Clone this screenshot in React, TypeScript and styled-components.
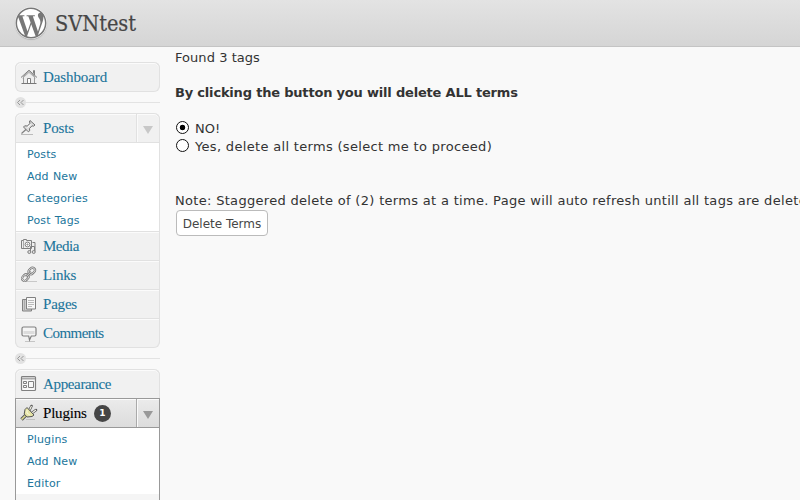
import React from 'react';
import styled, { createGlobalStyle, css } from 'styled-components';
import { FaWordpressSimple } from 'react-icons/fa';

const GlobalStyle = createGlobalStyle`
  * { box-sizing: border-box; }
  body { margin: 0; background: #f9f9f9; overflow: hidden; font-family: "DejaVu Sans", sans-serif; }
`;

const Page = styled.div`
  width: 800px;
  height: 500px;
  overflow: hidden;
  background: #f9f9f9;
`;

const Header = styled.header`
  height: 47px;
  display: flex;
  align-items: center;
  padding-left: 15px;
  gap: 8px;
  background: linear-gradient(#e3e3e3, #d5d5d5);
  border-bottom: 1px solid #c4c4c4;
`;

const Logo = styled.div`
  width: 32px;
  height: 32px;
  border-radius: 50%;
  background: #fff;
  color: #777;
  box-shadow: 0 1px 1px #b5b5b5;
  svg { display: block; }
`;

const SiteName = styled.h1`
  margin: 0;
  padding-top: 1px;
  font: 400 21.5px/46px "DejaVu Serif Condensed", "DejaVu Serif", serif;
  font-stretch: condensed;
  letter-spacing: 0;
  -webkit-text-stroke: 0.2px currentColor;
  color: #464646;
`;

const Body = styled.div`
  display: flex;
`;

const Sidebar = styled.nav`
  width: 145px;
  margin: 15px 0 0 15px;
  flex: none;
`;

const Group = styled.section`
  border: 1px solid #e1e1e1;
  border-top: 0;
  border-radius: 6px;
`;

const Row = styled.div<{ $first?: boolean; $last?: boolean; $active?: boolean }>`
  height: 29px;
  display: flex;
  align-items: center;
  margin: 0 -1px;
  border: 1px solid #e1e1e1;
  border-bottom: 0;
  background: #f1f1f1;
  box-shadow: inset 0 1px #fbfbfb;
  color: #21759b;
  ${p => p.$first && css`border-radius: 6px 6px 0 0;`}
  ${p => p.$last && css`border-radius: 0 0 6px 6px;`}
  ${p => p.$first && p.$last && css`border-radius: 6px;`}
  ${p => p.$active && css`
    border-color: #999;
    background: linear-gradient(#ebebeb, #dcdcdc);
    color: #000;
  `}
`;

const IconSlot = styled.span`
  width: 27px;
  padding-left: 3px;
  flex: none;
  svg { display: block; }
`;

const Label = styled.span<{ $width: number; $spacing: number }>`
  width: ${p => p.$width}px;
  padding-bottom: 1px;
  font: 400 15px/26px "Liberation Serif", serif;
  letter-spacing: ${p => p.$spacing}px;
  -webkit-text-stroke: 0.1px currentColor;
  white-space: nowrap;
`;

const Toggle = styled.span<{ $active?: boolean }>`
  width: 23px;
  height: 28px;
  margin-left: auto;
  padding-top: 4px;
  display: flex;
  align-items: center;
  justify-content: center;
  border-left: 1px solid ${p => (p.$active ? '#aaa' : '#e1e1e1')};
  box-shadow: inset 1px 0 #fafafa;
  &::after {
    content: "";
    margin-right: 1px;
    border: 5px solid transparent;
    border-top: 8px solid ${p => (p.$active ? '#999' : '#c8c8c8')};
    border-bottom: 0;
  }
`;

const Submenu = styled.div<{ $active?: boolean }>`
  background: #fff;
  border-top: 1px solid #e1e1e1;
  ${p => p.$active && css`
    margin: 0 -1px;
    border: 1px solid #999;
    border-bottom: 0;
  `}
`;

const SubItem = styled.a`
  display: block;
  height: 22px;
  padding-left: 11px;
  font-size: 11px;
  line-height: 24px;
  letter-spacing: 0.15px;
  word-spacing: 0.5px;
  color: #21759b;
`;

const MenuTail = styled.div`
  height: 8px;
  background: #f5f5f5;
`;

const Badge = styled.span`
  width: 17px;
  height: 17px;
  margin-top: 1px;
  border-radius: 50%;
  background: #464646;
  color: #fff;
  font: 700 9px/17px "DejaVu Sans", sans-serif;
  text-align: center;
`;

const Separator = styled.div`
  height: 21px;
  display: flex;
  align-items: center;
`;

const Collapse = styled.span`
  width: 11px;
  height: 11px;
  border-radius: 50%;
  background: #e2e2e2;
  svg { display: block; }
`;

const Rule = styled.span`
  flex: 1;
  height: 1px;
  background: #e3e3e3;
`;

const Content = styled.main`
  padding: 2px 0 0 15px;
  flex: none;
  font-size: 13px;
  line-height: 18px;
  white-space: nowrap;
  color: #333;
`;

const Line = styled.p<{ $gap?: number; $bold?: boolean; $spacing?: number }>`
  margin: 0 0 ${p => p.$gap || 0}px;
  height: 18px;
  font-weight: ${p => (p.$bold ? 700 : 400)};
  letter-spacing: ${p => p.$spacing || 0}px;
`;

const Choice = styled.label<{ $gap?: number; $spacing?: number }>`
  display: flex;
  align-items: center;
  height: 18px;
  gap: 6px;
  margin-bottom: ${p => p.$gap || 0}px;
  letter-spacing: ${p => p.$spacing || 0}px;
`;

const Radio = styled.span<{ $checked?: boolean }>`
  width: 13px;
  height: 13px;
  margin: -3px 0 0 1px;
  border: 1px solid #111;
  border-radius: 50%;
  background: ${p => (p.$checked ? 'radial-gradient(circle, #000 2.5px, #fff 3.1px)' : '#fff')};
`;

const Button = styled.button`
  display: block;
  width: 92px;
  height: 26px;
  margin: 0 0 0 1px;
  padding: 1px 0 0;
  font: 12px "DejaVu Sans", sans-serif;
  color: #464646;
  background: #fff;
  border: 1px solid #bbb;
  border-radius: 4px;
`;

const Icon = ({ children }: { children: React.ReactNode }) => (
  <svg width="20" height="20" viewBox="0 0 20 20" fill="none" stroke="#808080" strokeWidth="1">
    {children}
  </svg>
);

const icons = {
  home: (
    <Icon>
      <path d="M4.5 9.5v7h11v-7L10 4.5z" fill="#ededed" stroke="#999" />
      <path d="M2 10.5L10 3.2l8 7.300M14.5 6.5v-3h1V8" />
      <path d="M3.5 11.2L10 5.5l6.5 5.7" stroke="#aaa" strokeWidth=".8" />
      <path d="M8.5 16v-4.5h3V16" fill="#fff" />
      <path d="M2.5 16.5h15" stroke="#777" />
    </Icon>
  ),
  pin: (
    <Icon>
      <path d="M2 16.5h12" stroke="#bbb" />
      <path d="M7.5 11L2.5 15.5" strokeWidth="1.2" />
      <path d="M11 2.5l5 4.5-1.5 1.2-1.500-.4-2.5 2.7.2 2.300-1.400 1L4.500 9l1.200-1.200 2.500.2 3-2.700-.8-1.300z" fill="#dedede" stroke="#707070" />
      <path d="M8.5 9.5l3.3-3" stroke="#fff" />
    </Icon>
  ),
  media: (
    <Icon>
      <path d="M2.5 4.5h2v-1h3v1h5v8h-10z" fill="#eee" />
      <circle cx="8.5" cy="8.5" r="2.4" fill="#fff" />
      <circle cx="8.5" cy="8.5" r=".6" />
      <path d="M4.5 5v7" stroke="#aaa" />
      <path d="M11.5 15.500v-5h4v5M13.500 6.500h2.500v9" />
      <circle cx="10.300" cy="16" r="1.500" fill="#ddd" />
      <circle cx="14.700" cy="16" r="1.500" fill="#ddd" />
    </Icon>
  ),
  link: (
    <Icon>
      <path d="M7 16.500h11" stroke="#c8c8c8" />
      <g transform="translate(.5 -.2) rotate(-46 9 9.500)">
        <rect x=".8" y="7" width="7.200" height="5" rx="2.500" stroke="#777" strokeWidth="2.200" />
        <rect x="10" y="7" width="7.200" height="5" rx="2.500" stroke="#777" strokeWidth="2.200" />
        <rect x=".8" y="7" width="7.200" height="5" rx="2.500" stroke="#e4e4e4" strokeWidth=".9" />
        <rect x="10" y="7" width="7.200" height="5" rx="2.500" stroke="#e4e4e4" strokeWidth=".9" />
        <path d="M5.500 9.500h7" stroke="#777" strokeWidth="2.200" />
        <path d="M5.500 9.500h7" stroke="#ddd" strokeWidth=".9" />
      </g>
    </Icon>
  ),
  pages: (
    <Icon>
      <path d="M7 5.500H3.500v11.500h9V15" fill="#ccc" />
      <path d="M5.500 6v11" stroke="#aaa" />
      <path d="M7.500 3.500h9v11.500h-9z" fill="#f8f8f8" />
      <path d="M9 6.500h6M9 8.500h6M9 10.500h6M9 12.500h4" stroke="#bbb" />
    </Icon>
  ),
  comment: (
    <Icon>
      <path d="M6 18.500h10" stroke="#c5c5c5" />
      <path d="M4.500 4h11q1.500 0 1.500 1.500v6q0 1.500-1.500 1.500h-3.200L10.500 17l-.8-4H4.500Q3 13 3 11.500v-6Q3 4 4.500 4z" fill="#f5f5f5" strokeWidth="1.200" />
      <path d="M4.500 8h11v3h-11z" fill="#dcdcdc" stroke="none" />
    </Icon>
  ),
  appearance: (
    <Icon>
      <rect x="2.500" y="2.500" width="14" height="14" rx="1" fill="#f8f8f8" strokeWidth="1.200" />
      <path d="M3 4.500h13" stroke="#aaa" strokeWidth="2" />
      <path d="M4.500 7.500h3v2h-3zM4.500 11.500h3v2h-3zM9.500 7.500h5v6h-5z" />
    </Icon>
  ),
  plug: (
    <Icon>
      <path d="M7 16.500h9" stroke="#c0c0c0" />
      <path d="M7 12l-4.500 4.500" stroke="#555" strokeWidth="3.400" />
      <path d="M7 12l-4.500 4.500" stroke="#dedb91" strokeWidth="1.600" />
      <path d="M10.500 7l2-4M13 10l4-3" stroke="#555" strokeWidth="2.600" strokeLinecap="round" />
      <path d="M10.500 7l2-4M13 10l4-3" stroke="#f8f8ec" strokeWidth="1.100" />
      <path d="M8 4.500l7 7.500-2 1.500-5 .500-2.800-3 .8-4.500z" fill="#e6e4a5" stroke="#555" />
      <path d="M8 7v3l3 2.200" stroke="#fbfade" />
    </Icon>
  ),
};

type ItemProps = {
  name: string; icon: keyof typeof icons; spacing: number; width?: number;
  first?: boolean; last?: boolean; active?: boolean; toggle?: boolean; count?: number;
};

const MenuItem = ({ name, width = 51, spacing, icon, first, last, active, toggle, count }: ItemProps) => (
  <Row $first={first} $last={last} $active={active}>
    <IconSlot>{icons[icon]}</IconSlot>
    <Label $width={width} $spacing={spacing}>{name}</Label>
    {count && <Badge>{count}</Badge>}
    {toggle && <Toggle $active={active} />}
  </Row>
);

const Divider = () => (
  <Separator>
    <Collapse>
      <svg width="11" height="11" fill="none" stroke="#999">
        <path d="M5 3L2.500 5.500 5 8M8.500 3L6 5.500 8.500 8" />
      </svg>
    </Collapse>
    <Rule />
  </Separator>
);

export default function App() {
  return (
    <Page>
      <GlobalStyle />
      <Header>
        <Logo><FaWordpressSimple size={32} /></Logo>
        <SiteName>SVNtest</SiteName>
      </Header>
      <Body>
        <Sidebar>
          <Group><MenuItem name="Dashboard" width={66} spacing={-0.1} icon="home" first last /></Group>
          <Divider />
          <Group>
            <MenuItem name="Posts" spacing={-0.15} icon="pin" first toggle />
            <Submenu>
              {['Posts', 'Add New', 'Categories', 'Post Tags'].map(t => <SubItem key={t}>{t}</SubItem>)}
            </Submenu>
            <MenuItem name="Media" spacing={-0.5} icon="media" />
            <MenuItem name="Links" spacing={-0.2} icon="link" />
            <MenuItem name="Pages" spacing={-0.2} icon="pages" />
            <MenuItem name="Comments" width={70} spacing={-0.55} icon="comment" last />
          </Group>
          <Divider />
          <Group>
            <MenuItem name="Appearance" width={70} spacing={-0.35} icon="appearance" first />
            <MenuItem name="Plugins" spacing={-0.2} icon="plug" active toggle count={1} />
            <Submenu $active>
              {['Plugins', 'Add New', 'Editor'].map(t => <SubItem key={t}>{t}</SubItem>)}
              <MenuTail />
            </Submenu>
          </Group>
        </Sidebar>
        <Content>
          <Line $gap={17} $spacing={0.05}>Found 3 tags</Line>
          <Line $gap={18} $bold $spacing={-0.19}>By clicking the button you will delete ALL terms</Line>
          <Choice><Radio $checked />NO!</Choice>
          <Choice $gap={36} $spacing={0.32}><Radio />Yes, delete all terms (select me to proceed)</Choice>
          <Line $spacing={0.31}>Note: Staggered delete of (2) terms at a time. Page will auto refresh untill all tags are deleted.</Line>
          <Button>Delete Terms</Button>
        </Content>
      </Body>
    </Page>
  );
}
